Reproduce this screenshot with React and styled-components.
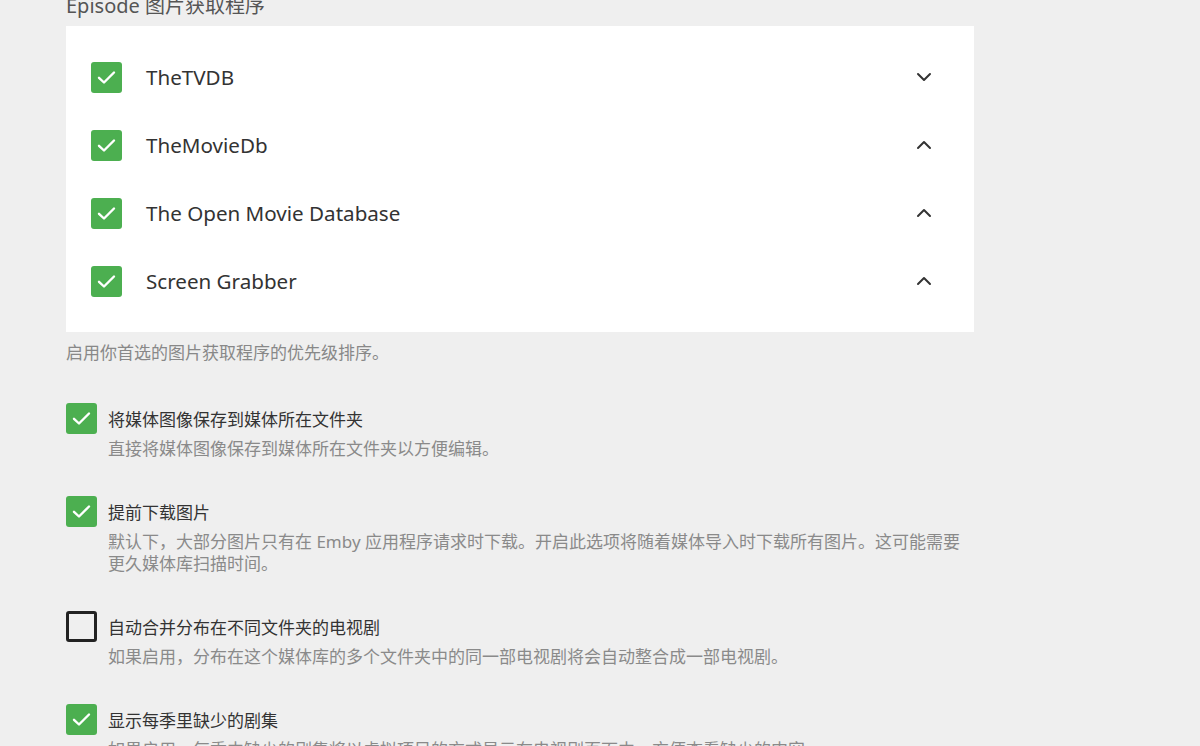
import styled, { createGlobalStyle } from "styled-components";

const GlobalStyle = createGlobalStyle`
  html, body {
    margin: 0;
    padding: 0;
    background: #efefef;
    overflow: hidden;
  }
  body {
    font-family: "Noto Sans", "Noto Sans CJK SC", sans-serif;
    color: #333;
  }
`;

const fetchers = [
  { name: "TheTVDB", dir: "down" },
  { name: "TheMovieDb", dir: "up" },
  { name: "The Open Movie Database", dir: "up" },
  { name: "Screen Grabber", dir: "up" },
];

const options = [
  {
    checked: true,
    label: "将媒体图像保存到媒体所在文件夹",
    desc: "直接将媒体图像保存到媒体所在文件夹以方便编辑。",
  },
  {
    checked: true,
    label: "提前下载图片",
    desc: "默认下，大部分图片只有在 Emby 应用程序请求时下载。开启此选项将随着媒体导入时下载所有图片。这可能需要更久媒体库扫描时间。",
  },
  {
    checked: false,
    label: "自动合并分布在不同文件夹的电视剧",
    desc: "如果启用，分布在这个媒体库的多个文件夹中的同一部电视剧将会自动整合成一部电视剧。",
  },
  {
    checked: true,
    label: "显示每季里缺少的剧集",
    desc: "如果启用，每季中缺少的剧集将以虚拟项目的方式显示在电视剧页面中，方便查看缺少的内容。",
  },
];

function Check({ checked }) {
  return (
    <Box $checked={checked}>
      {checked && (
        <svg width="19" height="15" viewBox="0 0 19 15">
          <path d="M2 7.8 L7 12.5 L17 2.5" fill="none" stroke="#fff" strokeWidth="2.4" strokeLinecap="round" strokeLinejoin="round" />
        </svg>
      )}
    </Box>
  );
}

function Chevron({ dir }) {
  return (
    <ChevronBtn>
      <svg width="16" height="10" viewBox="0 0 16 10">
        <path
          d={dir === "down" ? "M2 2 L8 8 L14 2" : "M2 8 L8 2 L14 8"}
          fill="none"
          stroke="#333"
          strokeWidth="2"
          strokeLinecap="round"
          strokeLinejoin="round"
        />
      </svg>
    </ChevronBtn>
  );
}

export default function App() {
  return (
    <>
      <GlobalStyle />
      <Page>
        <SectionTitle>Episode 图片获取程序</SectionTitle>
        <Panel>
          {fetchers.map((f) => (
            <FetcherRow key={f.name}>
              <Check checked />
              <FetcherName>{f.name}</FetcherName>
              <Chevron dir={f.dir} />
            </FetcherRow>
          ))}
        </Panel>
        <Hint>启用你首选的图片获取程序的优先级排序。</Hint>
        <OptionList>
          {options.map((o) => (
            <Option key={o.label}>
              <OptionHead>
                <Check checked={o.checked} />
                <OptionLabel>{o.label}</OptionLabel>
              </OptionHead>
              <OptionDesc>{o.desc}</OptionDesc>
            </Option>
          ))}
        </OptionList>
      </Page>
    </>
  );
}

const Page = styled.div`
  margin-top: -8px;
  padding-left: 66px;
  width: 908px;
`;

const SectionTitle = styled.h3`
  margin: 0 0 6px;
  font-size: 20px;
  font-weight: 400;
  line-height: 28px;
  color: #555;
`;

const Panel = styled.div`
  background: #fff;
  padding: 17px 0;
`;

const FetcherRow = styled.div`
  display: flex;
  align-items: center;
  height: 68px;
  padding: 0 38px 0 25px;
`;

const Box = styled.div`
  flex: none;
  box-sizing: border-box;
  width: 31px;
  height: 31px;
  border-radius: 3px;
  display: flex;
  align-items: center;
  justify-content: center;
  background: ${(p) => (p.$checked ? "#4caf50" : "transparent")};
  border: ${(p) => (p.$checked ? "none" : "3px solid #222")};
`;

const FetcherName = styled.span`
  flex: 1;
  margin-left: 24px;
  font-size: 20.6px;
  color: #333;
`;

const ChevronBtn = styled.span`
  display: flex;
  align-items: center;
  justify-content: center;
  width: 24px;
  height: 24px;
`;

const Hint = styled.div`
  margin-top: 10px;
  font-size: 17px;
  line-height: 22px;
  color: #888;
`;

const OptionList = styled.div`
  margin-top: 39px;
  display: flex;
  flex-direction: column;
  gap: 36px;
`;

const Option = styled.div`
  display: flex;
  flex-direction: column;
`;

const OptionHead = styled.div`
  display: flex;
  align-items: center;
  gap: 11px;
`;

const OptionLabel = styled.span`
  font-size: 17px;
  color: #333;
`;

const OptionDesc = styled.div`
  margin: 4px 0 0 42px;
  font-size: 17px;
  line-height: 22px;
  color: #8a8a8a;
`;
